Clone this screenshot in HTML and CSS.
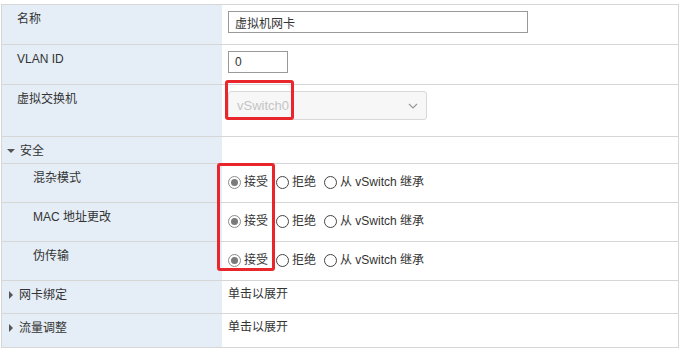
FILE: index.html
```html
<!DOCTYPE html>
<html lang="zh-CN">
<head>
    <meta charset="UTF-8">
    <title>虚拟机网卡</title>
    <link rel="stylesheet" href="styles.css">
</head>
<body>
    <div class="form">
        <div class="row row-name">
            <div class="label">名称</div>
            <div class="value"><input class="text-input wide" type="text" value="虚拟机网卡"></div>
        </div>
        <div class="row row-name">
            <div class="label">VLAN ID</div>
            <div class="value"><input class="text-input short" type="text" value="0"></div>
        </div>
        <div class="row row-switch">
            <div class="label">虚拟交换机</div>
            <div class="value">
                <div class="select">
                    <span>vSwitch0</span>
                    <svg width="10" height="6" viewBox="0 0 10 6"><path d="M1 1l4 4 4-4" fill="none" stroke="#999" stroke-width="1.2"/></svg>
                </div>
            </div>
        </div>
        <div class="row row-group">
            <div class="label"><span class="caret down"></span>安全</div>
            <div class="value"></div>
        </div>
        <div class="row row-policy">
            <div class="label sub">混杂模式</div>
            <div class="value radios">
                <span class="radio checked"></span><span class="opt">接受</span>
                <span class="radio"></span><span class="opt">拒绝</span>
                <span class="radio"></span><span class="opt">从 vSwitch 继承</span>
            </div>
        </div>
        <div class="row row-policy">
            <div class="label sub">MAC 地址更改</div>
            <div class="value radios">
                <span class="radio checked"></span><span class="opt">接受</span>
                <span class="radio"></span><span class="opt">拒绝</span>
                <span class="radio"></span><span class="opt">从 vSwitch 继承</span>
            </div>
        </div>
        <div class="row row-policy">
            <div class="label sub">伪传输</div>
            <div class="value radios">
                <span class="radio checked"></span><span class="opt">接受</span>
                <span class="radio"></span><span class="opt">拒绝</span>
                <span class="radio"></span><span class="opt">从 vSwitch 继承</span>
            </div>
        </div>
        <div class="row row-fold">
            <div class="label"><span class="caret right"></span>网卡绑定</div>
            <div class="value plain">单击以展开</div>
        </div>
        <div class="row row-fold last">
            <div class="label"><span class="caret right"></span>流量调整</div>
            <div class="value plain">单击以展开</div>
        </div>

        <!-- highlight marks -->
        <div class="mark mark-switch"></div>
        <div class="mark mark-accept"></div>
    </div>
</body>
</html>
```

FILE: styles.css
```css
body {
    margin: 4px 0 0 1px;
    font-family: "Liberation Sans", Arial, "Noto Sans CJK SC", sans-serif;
    font-size: 12px;
    color: #333;
    background: #fff;
}
.form {
    position: relative;
    width: 676px;
    border: 1px solid #d6d6d6;
}
.row {
    display: grid;
    grid-template-columns: 220px 1fr;
    border-bottom: 1px solid #d6d6d6;
}
.row.last {
    border-bottom: none;
}
.row-name { height: 39px; }
.row-switch { height: 51px; }
.row-group { height: 26px; }
.row-policy { height: 38px; }
.row-fold { height: 32px; }
.row-fold.last { height: 33px; }
.label {
    background: #e5eef6;
    padding: 7px 0 0 15px;
    line-height: 14px;
    display: flex;
    align-items: flex-start;
}
.label.sub {
    padding-left: 31px;
}
.row-group .label,
.row-fold .label {
    padding-left: 4px;
}
.caret {
    width: 0;
    height: 0;
}
.caret.down {
    border-left: 4px solid transparent;
    border-right: 4px solid transparent;
    border-top: 4px solid #555;
    margin: 5px 5px 0 1px;
}
.caret.right {
    border-top: 4px solid transparent;
    border-bottom: 4px solid transparent;
    border-left: 4px solid #555;
    margin: 3px 6px 0 3px;
}
.value {
    padding: 6px 0 0 6px;
}
.value.plain {
    padding-top: 6px;
    line-height: 14px;
}
.text-input {
    box-sizing: border-box;
    height: 22px;
    border: 1px solid #999;
    padding: 0 6px;
    font: inherit;
    color: #333;
    outline: none;
}
.text-input.wide { width: 300px; }
.text-input.short { width: 60px; }
.select {
    box-sizing: border-box;
    width: 199px;
    height: 29px;
    border: 1px solid #d8d8d8;
    border-radius: 3px;
    background: #f7f7f7;
    display: flex;
    align-items: center;
    justify-content: space-between;
    padding: 0 8px 0 8px;
    color: #c4c4c4;
    font-size: 13px;
}
.radios {
    display: flex;
    align-items: center;
    padding-top: 11px;
    height: 14px;
}
.radio {
    box-sizing: border-box;
    width: 13px;
    height: 13px;
    border: 1px solid #444;
    border-radius: 50%;
    background: #fff;
    margin: 0 3px 0 0;
    display: flex;
    align-items: center;
    justify-content: center;
}
.radio.checked {
    border-color: #8c8c8c;
}
.radio.checked::after {
    content: "";
    width: 7px;
    height: 7px;
    border-radius: 50%;
    background: #7a7a7a;
}
.opt {
    margin-right: 8px;
    line-height: 14px;
}
.mark {
    position: absolute;
    border: 3px solid #e8262b;
    border-radius: 3px;
    box-sizing: border-box;
}
.mark-switch {
    left: 223px;
    top: 75px;
    width: 69px;
    height: 40px;
}
.mark-accept {
    left: 215px;
    top: 158px;
    width: 58px;
    height: 108px;
}
```
